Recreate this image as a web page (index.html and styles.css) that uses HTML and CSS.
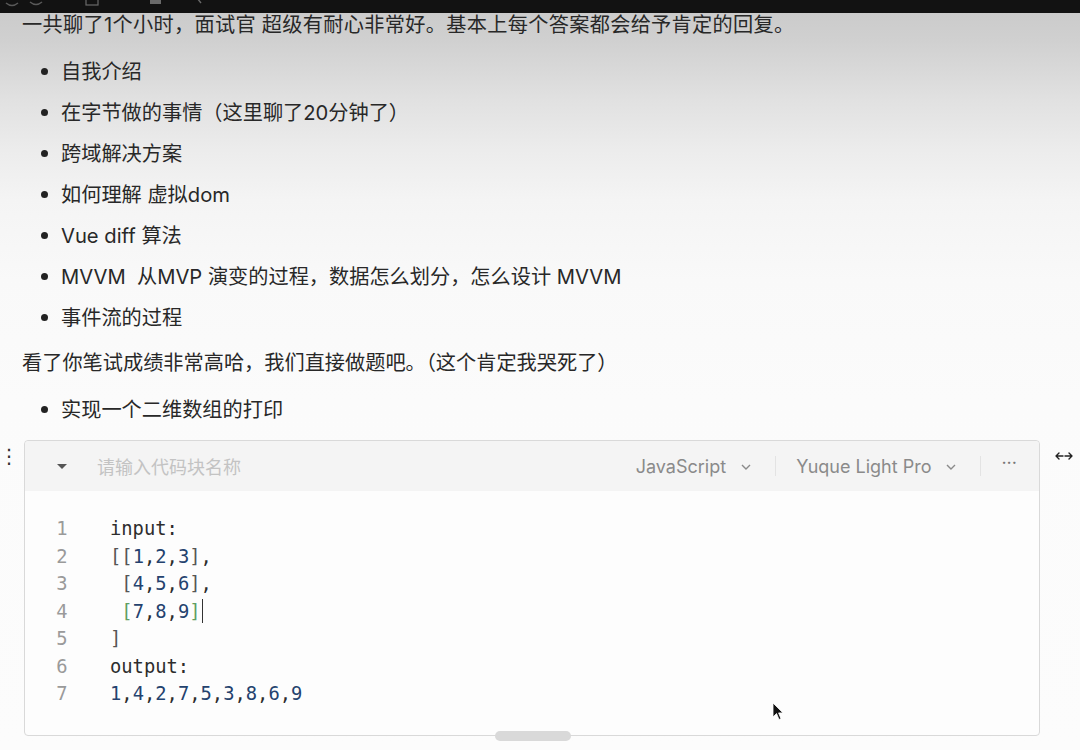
FILE: index.html
```html
<!DOCTYPE html>
<html lang="zh-CN">
<head>
<meta charset="utf-8">
<title>面试记录</title>
<link rel="stylesheet" href="styles.css">
</head>
<body>
<div class="topbar">
  <svg class="topbar-icons" width="240" height="13" viewBox="0 0 240 13">
    <path d="M6 3 Q12 8 18 3" stroke="#5a5a5a" stroke-width="1.5" fill="none"/>
    <path d="M30 2 Q36 7 42 2" stroke="#5a5a5a" stroke-width="1.5" fill="none"/>
    <rect x="86" y="-4" width="12" height="9" stroke="#6a6a6a" stroke-width="1.2" fill="none"/>
    <rect x="150" y="-4" width="11" height="8" fill="#6a6a6a"/>
    <path d="M197 -2 L201 3" stroke="#6a6a6a" stroke-width="1.4" fill="none"/>
  </svg>
</div>
<main class="doc">
  <p class="para first">一共聊了1个小时，面试官 超级有耐心非常好。基本上每个答案都会给予肯定的回复。</p>
  <ul class="list">
    <li>自我介绍</li>
    <li>在字节做的事情（这里聊了20分钟了）</li>
    <li>跨域解决方案</li>
    <li>如何理解 虚拟dom</li>
    <li>Vue diff 算法</li>
    <li>MVVM &nbsp;从MVP 演变的过程，数据怎么划分，怎么设计 MVVM</li>
    <li>事件流的过程</li>
  </ul>
  <p class="para">看了你笔试成绩非常高哈，我们直接做题吧。（这个肯定我哭死了）</p>
  <ul class="list">
    <li>实现一个二维数组的打印</li>
  </ul>
  <div class="code-wrap">
    <span class="drag-handle">⋮</span>
    <span class="expand-icon">
      <svg width="18" height="12" viewBox="0 0 18 12"><path d="M1 6 H8 M1 6 L4 3 M1 6 L4 9 M10 6 H17 M17 6 L14 3 M17 6 L14 9" stroke="#222" stroke-width="1.4" fill="none" stroke-linecap="round"/></svg>
    </span>
    <div class="code-block">
      <div class="code-header">
        <span class="caret"></span>
        <span class="title-input">请输入代码块名称</span>
        <span class="spacer"></span>
        <span class="select">JavaScript <svg class="chev" width="12" height="8" viewBox="0 0 12 8"><path d="M2 2 L6 6 L10 2" stroke="#8a8a8a" stroke-width="1.4" fill="none"/></svg></span>
        <span class="sep"></span>
        <span class="select">Yuque Light Pro <svg class="chev" width="12" height="8" viewBox="0 0 12 8"><path d="M2 2 L6 6 L10 2" stroke="#8a8a8a" stroke-width="1.4" fill="none"/></svg></span>
        <span class="sep"></span>
        <span class="more">···</span>
      </div>
      <div class="code-body">
        <div class="gutter">
          <div>1</div><div>2</div><div>3</div><div>4</div><div>5</div><div>6</div><div>7</div>
        </div>
        <div class="code">
          <div class="line">input:</div>
          <div class="line"><span class="br">[[</span><span class="num">1</span>,<span class="num">2</span>,<span class="num">3</span><span class="br">]</span>,</div>
          <div class="line"> <span class="br">[</span><span class="num">4</span>,<span class="num">5</span>,<span class="num">6</span><span class="br">]</span>,</div>
          <div class="line"> <span class="match">[</span><span class="num">7</span>,<span class="num">8</span>,<span class="num">9</span><span class="match">]</span><span class="cursor"></span></div>
          <div class="line"><span class="br">]</span></div>
          <div class="line">output:</div>
          <div class="line"><span class="num">1</span>,<span class="num">4</span>,<span class="num">2</span>,<span class="num">7</span>,<span class="num">5</span>,<span class="num">3</span>,<span class="num">8</span>,<span class="num">6</span>,<span class="num">9</span></div>
        </div>
      </div>
      <span class="scroll-thumb"></span>
    </div>
    <svg class="mouse" width="14" height="20" viewBox="0 0 14 20"><path d="M1 1 L1 15 L4.5 11.5 L7 17.5 L9 16.7 L6.6 10.9 L11 10.9 Z" fill="#111" stroke="#fff" stroke-width="0.8"/></svg>
  </div>
</main>
</body>
</html>
```

FILE: styles.css
```css
html, body {
  margin: 0;
  padding: 0;
}
body {
  width: 1080px;
  height: 750px;
  overflow: hidden;
  font-family: Inter, "Noto Sans CJK SC", sans-serif;
  color: #282828;
  background: linear-gradient(to bottom, #c9c9c9 0px, #d0d0d0 40px, #e1e1e1 100px, #ececec 150px, #f4f4f4 200px, #f9f9f9 280px, #fbfbfb 400px, #fcfcfc 750px);
}
.topbar {
  height: 13px;
  background: #121212;
  overflow: hidden;
}
.topbar-icons {
  display: block;
}
.doc {
  padding: 0 40px 0 22px;
}
.para {
  margin: 0;
  font-size: 20.2px;
  line-height: 26px;
  white-space: nowrap;
}
.para.first {
  margin-top: -1px;
  letter-spacing: 0.3px;
}
.list {
  margin: 12px 0 0 0;
  padding: 0 0 0 39px;
  list-style: none;
}
.list li {
  position: relative;
  font-size: 20.2px;
  line-height: 41px;
}
.list li::before {
  content: "";
  position: absolute;
  left: -20px;
  top: 17px;
  width: 7px;
  height: 7px;
  border-radius: 50%;
  background: #222;
}
.list + .para {
  margin-top: 12px;
}
.para + .list {
  margin-top: 13px;
}
.code-wrap {
  position: relative;
  margin-top: 10px;
  margin-left: 2px;
  width: 1016px;
}
.drag-handle {
  position: absolute;
  left: -25px;
  top: 4px;
  font-size: 20px;
  line-height: 24px;
  color: #333;
  font-family: "DejaVu Sans", sans-serif;
}
.expand-icon {
  position: absolute;
  right: -33px;
  top: 6px;
}
.code-block {
  position: relative;
  border: 1px solid #d9d9d9;
  border-radius: 4px;
  background: #fdfdfd;
  height: 294px;
}
.code-header {
  display: flex;
  align-items: center;
  height: 50px;
  background: #f4f4f4;
  border-radius: 4px 4px 0 0;
  padding: 0 22px 0 32px;
  font-size: 18px;
}
.caret {
  width: 0;
  height: 0;
  border-left: 5px solid transparent;
  border-right: 5px solid transparent;
  border-top: 5px solid #555;
  margin-right: 30px;
}
.title-input {
  color: #c3c3c3;
  font-family: "Noto Sans CJK SC", sans-serif;
}
.spacer {
  flex: 1;
}
.select {
  display: flex;
  align-items: center;
  gap: 14px;
  color: #8a8a8a;
  font-family: Inter, "Liberation Sans", sans-serif;
}
.chev {
  margin-top: 2px;
}
.sep {
  width: 1px;
  height: 20px;
  background: #e3e3e3;
  margin: 0 20px 0 23px;
}
.more {
  color: #777;
  font-size: 18px;
  line-height: 18px;
  padding-bottom: 6px;
}
.code-body {
  display: flex;
  padding-top: 24px;
  font-family: "DejaVu Sans Mono", monospace;
  font-size: 18.8px;
  line-height: 27.5px;
}
.gutter {
  width: 42px;
  padding-left: 16px;
  margin-right: 27px;
  text-align: center;
  color: #9a9a9a;
}
.code {
  color: #2d2d2d;
}
.line {
  white-space: pre;
  height: 27.5px;
}
.num {
  color: #24426e;
}
.br {
  color: #555;
}
.match {
  color: #5f9e63;
}
.cursor {
  display: inline-block;
  width: 1.5px;
  height: 24px;
  background: #333;
  vertical-align: -5px;
  margin-left: 1px;
}
.scroll-thumb {
  position: absolute;
  left: 470px;
  bottom: -6px;
  width: 76px;
  height: 10px;
  border-radius: 5px;
  background: #d9d9d9;
}
.mouse {
  position: absolute;
  left: 748px;
  top: 262px;
}
```
